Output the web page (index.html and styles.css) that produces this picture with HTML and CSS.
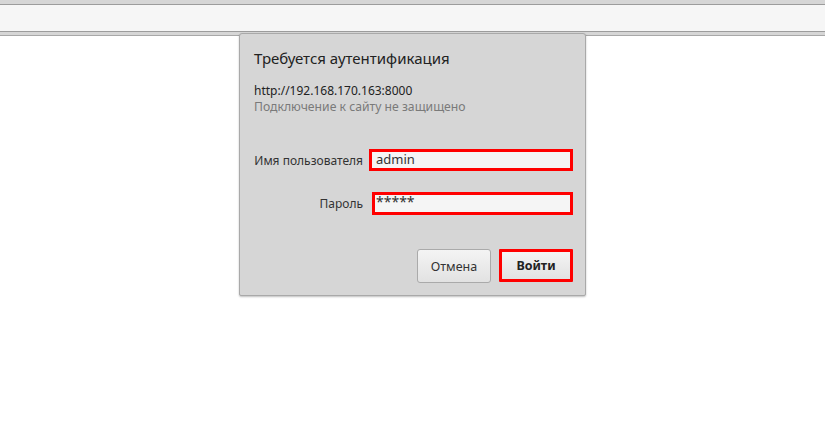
FILE: index.html
```html
<!DOCTYPE html>
<html lang="ru">
<head>
<meta charset="utf-8">
<link rel="stylesheet" href="styles.css">
</head>
<body>
<div class="chrome">
  <div class="top-strip"></div>
  <div class="address-bar"></div>
  <div class="bottom-strip"></div>
</div>
<div class="dialog">
  <div class="title">Требуется аутентификация</div>
  <div class="url">http://192.168.170.163:8000</div>
  <div class="note">Подключение к сайту не защищено</div>
  <div class="form">
    <label class="label">Имя пользователя</label>
    <div class="input user">admin</div>
    <label class="label">Пароль</label>
    <div class="input pass">*****</div>
  </div>
  <div class="actions">
    <button class="btn">Отмена</button>
    <button class="btn primary">Войти</button>
  </div>
</div>
</body>
</html>
```
FILE: styles.css
```css
html, body {
  margin: 0;
  padding: 0;
  background: #ffffff;
  font-family: "Noto Sans", "Open Sans", sans-serif;
}
.chrome {
  display: flex;
  flex-direction: column;
}
.top-strip {
  height: 4px;
  background: #d6d6d6;
  border-bottom: 1px solid #9c9c9c;
}
.address-bar {
  height: 26px;
  background: #f6f6f6;
  border-bottom: 1px solid #9c9c9c;
}
.bottom-strip {
  height: 3px;
  background: #d6d6d6;
  border-bottom: 1px solid #a8a8a8;
}
.dialog {
  position: absolute;
  left: 239px;
  top: 33px;
  width: 345px;
  height: 261px;
  box-sizing: content-box;
  background: #d6d6d6;
  border: 1px solid #a9a9a9;
  border-radius: 3px 3px 2px 2px;
  box-shadow: 0 1px 2px rgba(0,0,0,0.25);
  padding: 0;
}
.title {
  margin: 13px 0 0 14px;
  font-size: 15px;
  line-height: 22px;
  color: #222;
}
.url {
  margin: 14px 0 0 14px;
  font-size: 12px;
  line-height: 16px;
  color: #222;
}
.note {
  margin: 0 0 0 14px;
  font-size: 12.2px;
  line-height: 16px;
  color: #7a7a7a;
}
.form {
  display: grid;
  grid-template-columns: 123px 204px;
  column-gap: 6px;
  row-gap: 21px;
  align-items: center;
  margin-top: 34px;
}
.label {
  justify-self: end;
  font-size: 12px;
  color: #333;
}
.input {
  height: 22px;
  box-sizing: border-box;
  background: #f5f5f5;
  border: 3px solid #ff0000;
  font-size: 13px;
  color: #333;
  padding-left: 4px;
  line-height: 15px;
}
.input.pass {
  margin-left: 3px;
  height: 23px;
  line-height: 13px;
  font-size: 14px;
  padding-left: 1px;
}
.actions {
  display: flex;
  justify-content: flex-end;
  align-items: flex-start;
  gap: 8px;
  margin: 34px 12px 0 0;
}
.btn {
  width: 74px;
  height: 34px;
  box-sizing: border-box;
  font-family: "Noto Sans", "Open Sans", sans-serif;
  font-size: 12.5px;
  color: #333;
  background: linear-gradient(#f4f4f4, #e2e2e2);
  border: 1px solid #aaaaaa;
  border-radius: 3px;
  padding: 0;
}
.btn.primary {
  height: 33px;
  border: 3px solid #ff0000;
  border-radius: 1px;
  font-weight: bold;
  color: #222;
}
```
